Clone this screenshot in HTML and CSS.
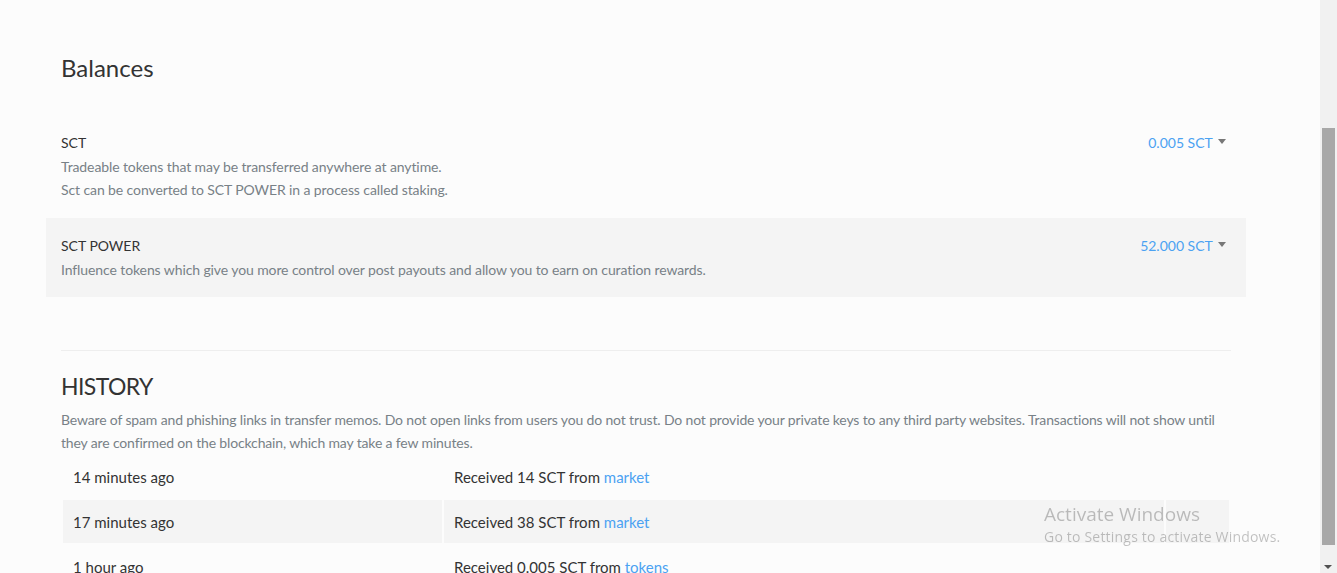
FILE: index.html
```html
<!DOCTYPE html>
<html lang="en">
<head>
<meta charset="utf-8">
<title>Balances</title>
<link rel="stylesheet" href="styles.css">
</head>
<body>
<div class="frame">
  <main class="page">
    <div class="wrap">
      <h2 class="title">Balances</h2>
      <div class="balance">
        <div class="balance-info">
          <div class="balance-label">SCT</div>
          <div class="balance-desc">Tradeable tokens that may be transferred anywhere at anytime.</div>
          <div class="balance-desc">Sct can be converted to SCT POWER in a process called staking.</div>
        </div>
        <div class="balance-value">0.005 SCT <span class="caret"></span></div>
      </div>
      <div class="balance alt">
        <div class="balance-info">
          <div class="balance-label">SCT POWER</div>
          <div class="balance-desc">Influence tokens which give you more control over post payouts and allow you to earn on curation rewards.</div>
        </div>
        <div class="balance-value">52.000 SCT <span class="caret"></span></div>
      </div>
      <hr class="rule">
      <h2 class="title history">HISTORY</h2>
      <p class="notice">Beware of spam and phishing links in transfer memos. Do not open links from users you do not trust. Do not provide your private keys to any third party websites. Transactions will not show until they are confirmed on the blockchain, which may take a few minutes.</p>
      <table class="history-table">
        <tbody>
          <tr><td class="c-time">14 minutes ago</td><td class="c-op">Received 14 SCT from <a href="#">market</a></td><td class="c-memo"></td></tr>
          <tr class="alt"><td class="c-time">17 minutes ago</td><td class="c-op">Received 38 SCT from <a href="#">market</a></td><td class="c-memo"></td></tr>
          <tr><td class="c-time">1 hour ago</td><td class="c-op">Received 0.005 SCT from <a href="#">tokens</a></td><td class="c-memo"></td></tr>
        </tbody>
      </table>
    </div>
  </main>
  <div class="scrollbar">
    <div class="thumb"></div>
    <div class="arrow-down"></div>
  </div>
</div>
<div class="watermark">
  <div class="wm-title">Activate Windows</div>
  <div class="wm-sub">Go to Settings to activate Windows.</div>
</div>
</body>
</html>
```

FILE: styles.css
```css
html, body {
  margin: 0;
  padding: 0;
  height: 100%;
  overflow: hidden;
}
body {
  background: #fcfcfc;
  font-family: Lato, "Noto Sans", sans-serif;
  color: #333;
}
.frame {
  display: flex;
  height: 573px;
}
.page {
  flex: 1;
  overflow: hidden;
}
.wrap {
  margin-left: 61px;
  width: 1170px;
}
.title {
  margin: 0;
  padding-top: 53px;
  font-size: 24px;
  font-weight: 400;
  line-height: 30px;
  color: #333;
}
.balance {
  display: flex;
  justify-content: space-between;
  margin: 32px -15px 0 -15px;
  padding: 16px 20px 17px 15px;
}
.balance.alt {
  margin-top: 0;
  padding-bottom: 16px;
  background: #f4f4f4;
}
.balance-label {
  font-size: 14px;
  line-height: 24px;
  color: #333;
}
.balance-desc {
  font-size: 14px;
  letter-spacing: -0.1px;
  line-height: 23px;
  color: #788187;
}
.balance-value {
  font-size: 14px;
  line-height: 24px;
  color: #4ba2f2;
  white-space: nowrap;
}
.caret {
  display: inline-block;
  width: 0;
  height: 0;
  margin-left: 2px;
  vertical-align: 4px;
  border-left: 4px solid transparent;
  border-right: 4px solid transparent;
  border-top: 5px solid #777;
}
.rule {
  margin: 53px 0 0 0;
  border: 0;
  border-top: 1px solid #eee;
}
.title.history {
  padding-top: 20px;
  font-size: 23px;
  letter-spacing: -0.6px;
}
.notice {
  margin: 7px 0 0 0;
  font-size: 14px;
  letter-spacing: -0.15px;
  line-height: 23px;
  color: #788187;
}
.history-table {
  width: 1170px;
  margin-top: -1px;
  border-collapse: separate;
  border-spacing: 2px;
  margin-left: 0;
  font-size: 15px;
  color: #333;
}
.history-table td {
  height: 43px;
  padding: 0 10px;
  box-sizing: border-box;
  vertical-align: middle;
}
.history-table tr.alt td {
  background: #f4f4f4;
}
.c-time { width: 379px; }
.c-op { width: 720px; }
.history-table a {
  color: #4ba2f2;
  text-decoration: none;
}
.scrollbar {
  width: 17px;
  background: #f1f1f1;
  position: relative;
}
.thumb {
  position: absolute;
  left: 2px;
  right: 2px;
  top: 128px;
  height: 417px;
  background: #a8a8a8;
}
.arrow-down {
  position: absolute;
  left: 4px;
  bottom: 4px;
  width: 0;
  height: 0;
  border-left: 4px solid transparent;
  border-right: 4px solid transparent;
  border-top: 4px solid #505050;
}
.watermark {
  position: fixed;
  left: 1044px;
  top: 501px;
  font-family: "Open Sans", "Noto Sans", sans-serif;
  color: rgba(0, 0, 0, 0.24);
  pointer-events: none;
}
.wm-title {
  font-size: 19px;
  line-height: 26px;
}
.wm-sub {
  font-size: 14px;
  letter-spacing: 0.2px;
  line-height: 20px;
}
```
